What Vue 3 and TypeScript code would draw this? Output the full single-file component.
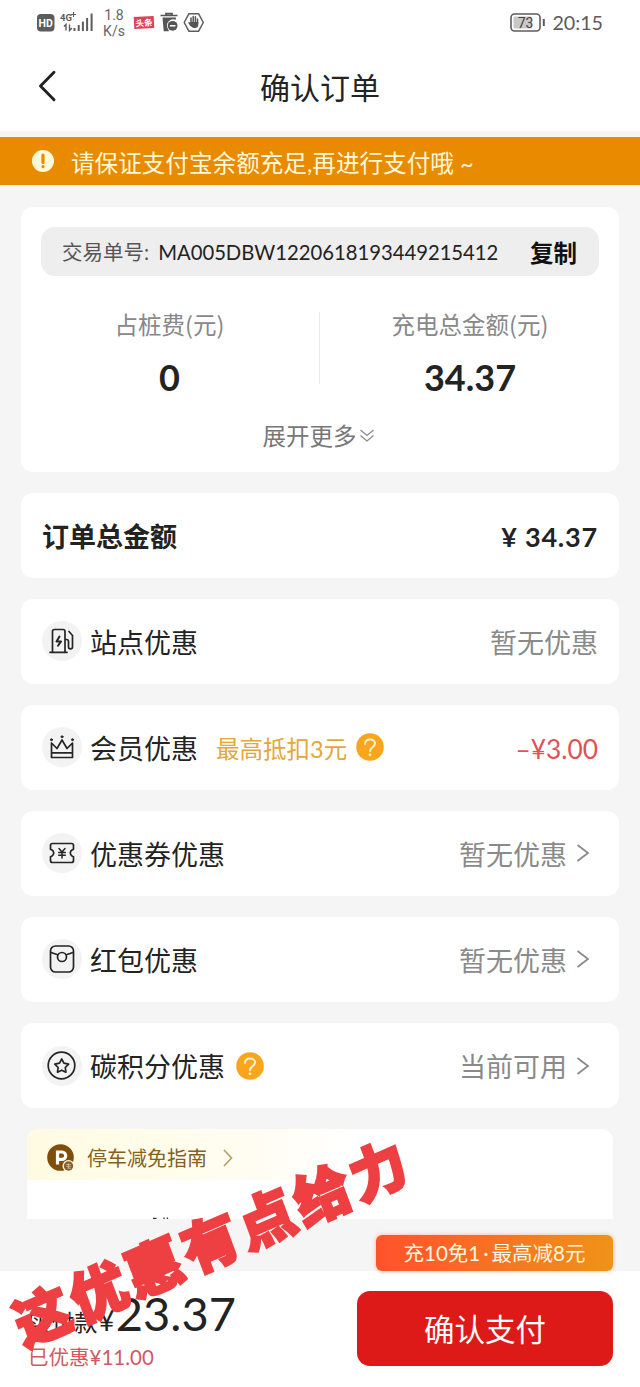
<script setup lang="ts">
type IconName = 'station' | 'crown' | 'coupon' | 'packet' | 'star'

interface DiscountRow {
  icon: IconName
  label: string
  hint?: string
  help?: boolean
  value: string
  negative?: boolean
  arrow?: boolean
}

const rows: DiscountRow[] = [
  { icon: 'station', label: '站点优惠', value: '暂无优惠' },
  { icon: 'crown', label: '会员优惠', hint: '最高抵扣3元', help: true, value: '–¥3.00', negative: true },
  { icon: 'coupon', label: '优惠券优惠', value: '暂无优惠', arrow: true },
  { icon: 'packet', label: '红包优惠', value: '暂无优惠', arrow: true },
  { icon: 'star', label: '碳积分优惠', help: true, value: '当前可用', arrow: true },
]
</script>

<template>
  <div class="screen">
    <div class="status">
      <svg class="status-icons" width="180" height="46" viewBox="0 0 180 46">
        <rect x="7" y="14" width="17.500" height="17.500" rx="4" fill="#5c5c5c" />
        <text x="15.700" y="27" text-anchor="middle" class="hd">HD</text>
        <text x="30" y="20.500" class="net">4G</text>
        <path d="M43.500 12v5M41 14.500h5" stroke="#5c5c5c" stroke-width="1.100" />
        <path d="M36 30.500v-6l-2 2M39.500 24.500v6l2.500-2.500" fill="none" stroke="#5c5c5c" stroke-width="1.400" />
        <path d="M44.500 31v-3M48.700 31v-6M52.900 31v-9.500M57.100 31v-13M61.600 31v-17.500" stroke="#5c5c5c" stroke-width="2" />
        <text x="84" y="20" text-anchor="middle" class="speed">1.8</text>
        <text x="84" y="36" text-anchor="middle" class="speed">K/s</text>
        <g transform="rotate(-3 114 22.500)">
          <rect x="104" y="16.500" width="20" height="12" fill="#dd4258" />
          <text x="114" y="26" text-anchor="middle" class="news">头条</text>
        </g>
        <path d="M130.500 15.500h17M136 15v-1.300h6V15" fill="none" stroke="#555" stroke-width="1.700" />
        <path d="M132.500 17.500h13.500l-.3 2.300a6.300 6.300 0 0 0-7.700 9.200l1 2.300h-5.300z" fill="#555" />
        <circle cx="142.600" cy="25.800" r="4.900" fill="#555" />
        <path d="M139.800 25.800h5.600" stroke="#fff" stroke-width="1.500" />
        <path d="M159 13.700h9.500l4.800 8.800-4.800 8.800H159l-4.800-8.800z" fill="none" stroke="#5c5c5c" stroke-width="1.500" stroke-linejoin="round" />
        <path d="M161 23v-5M163.200 23v-6.500M165.400 23v-6.300M167.500 23.500v-4.500M159 22.800l2 2.700" stroke="#555" stroke-width="1.500" stroke-linecap="round" />
        <path d="M160.300 22h8v3c0 1.800-1.500 3-3.800 3-2.200 0-3.200-1-4.200-3z" fill="#555" />
      </svg>
      <div class="status-right">
        <svg width="36" height="20" viewBox="0 0 36 20">
          <rect x="1" y="1" width="29" height="17" rx="3.500" fill="none" stroke="#5c5c5c" stroke-width="1.600" />
          <rect x="3.500" y="3.500" width="18" height="12" rx="1" fill="#c8c8c8" />
          <text x="15.500" y="14.800" text-anchor="middle" class="battery">73</text>
          <path d="M33.800 6v7" stroke="#5c5c5c" stroke-width="2" />
        </svg>
        <span class="clock">20:15</span>
      </div>
    </div>

    <header class="header">
      <svg class="back" width="20" height="32" viewBox="0 0 20 32">
        <path d="M17 2.200 3.500 16 17 29.800" fill="none" stroke="#222" stroke-width="2.900" stroke-linecap="round" stroke-linejoin="round" />
      </svg>
      <h1>确认订单</h1>
    </header>

    <div class="notice">
      <svg width="22" height="22" viewBox="0 0 22 22">
        <circle cx="11" cy="11" r="11" fill="#fff8d8" />
        <path d="M11 5v7.500" stroke="#e88b00" stroke-width="3.200" stroke-linecap="round" />
        <circle cx="11" cy="16.600" r="1.600" fill="#e88b00" />
      </svg>
      <span>请保证支付宝余额充足,再进行支付哦 ~</span>
    </div>

    <main class="content">
      <section class="card summary">
        <div class="order">
          <span class="order-label">交易单号:</span>
          <span class="order-no">MA005DBW1220618193449215412</span>
          <b>复制</b>
        </div>
        <div class="fees">
          <div class="fee">
            <span>占桩费(元)</span>
            <strong>0</strong>
          </div>
          <i class="divider"></i>
          <div class="fee">
            <span>充电总金额(元)</span>
            <strong>34.37</strong>
          </div>
        </div>
        <div class="more">
          <span>展开更多</span>
          <svg width="16" height="14" viewBox="0 0 16 14">
            <path d="M1.500 1 8 6.500 14.500 1M1.500 6.500 8 12l6.500-5.500" fill="none" stroke="#8a8a8a" stroke-width="1.200" />
          </svg>
        </div>
      </section>

      <section class="card row total">
        <b>订单总金额</b>
        <strong>¥ 34.37</strong>
      </section>

      <section v-for="row in rows" :key="row.icon" class="card row">
        <div class="badge">
          <svg width="30" height="30" viewBox="0 0 30 30" fill="none" stroke="#252525" stroke-width="1.700" stroke-linecap="round" stroke-linejoin="round">
            <template v-if="row.icon === 'station'">
              <path d="M5.500 26V5.500Q5.500 3.500 7.500 3.500H16Q18 3.500 18 5.500V26M3 26.300h17M18 13.500h1.500q2 0 2 2V21q0 1.900 2 1.900t2-1.900V9.500L22 5.500M25.500 12V9.500" />
              <path d="M12.500 10.500 9.500 15.500h4.500L11 19.800" stroke-width="2" />
            </template>
            <template v-else-if="row.icon === 'crown'">
              <path d="M4.500 11v14.500h21V11L20 16.500 15 8l-5 8.500zM4.500 20.800h21" />
              <circle cx="15" cy="4.800" r="1" fill="#252525" stroke-width="1" />
              <circle cx="4.500" cy="7.700" r="1" fill="#252525" stroke-width="1" />
              <circle cx="25.500" cy="7.700" r="1" fill="#252525" stroke-width="1" />
            </template>
            <template v-else-if="row.icon === 'coupon'">
              <path d="M5.500 5.500h19q2 0 2 2v3.700l-1.500.8a3.500 3.500 0 0 0 0 6l1.500.8v3.700q0 2-2 2h-19q-2 0-2-2v-3.700L5 18a3.500 3.500 0 0 0 0-6l-1.500-.8V7.500q0-2 2-2z" />
              <path d="m12 10.500 3 3.500 3-3.500M15 14v6M11.700 14.500h6.600M11.700 17.300h6.600" stroke-width="1.500" />
            </template>
            <template v-else-if="row.icon === 'packet'">
              <rect x="3.500" y="2" width="23" height="26" rx="5" />
              <path d="M4 8.500 10.700 10.700M26 8.500 19.300 10.700" />
              <circle cx="15" cy="13" r="4.500" />
            </template>
            <template v-else>
              <circle cx="14.500" cy="14.500" r="13.300" />
              <path d="m14.700 8 2.200 4.200 4.700.9-3.300 3.400.6 4.700-4.200-2-4.200 2 .6-4.700-3.300-3.400 4.700-.9z" />
            </template>
          </svg>
        </div>
        <span class="label">{{ row.label }}</span>
        <span v-if="row.hint" class="hint">{{ row.hint }}</span>
        <svg v-if="row.help" class="help" width="28" height="28" viewBox="0 0 28 28">
          <circle cx="14" cy="14" r="13.800" fill="#fba51c" />
          <path d="M9 11c.2-3 2.300-4.600 5-4.600 2.900 0 5 1.700 5 4.200 0 3.300-5 3.500-5 7.600" fill="none" stroke="#fff2cf" stroke-width="2" stroke-linecap="round" />
          <circle cx="14" cy="21.800" r="1.400" fill="#fff2cf" />
        </svg>
        <span class="value" :class="{ negative: row.negative }">{{ row.value }}</span>
        <svg v-if="row.arrow" class="arrow" width="14" height="20" viewBox="0 0 14 20">
          <path d="M1.500 2 12 10 1.500 18" fill="none" stroke="#8a8a8a" stroke-width="1.800" />
        </svg>
      </section>

      <section class="parking">
        <div class="parking-head">
          <svg width="28" height="28" viewBox="0 0 28 28">
            <circle cx="13.500" cy="13.500" r="13.300" fill="#7f4e08" />
            <path d="M10.500 20.500V8h4.500a3.700 3.700 0 0 1 0 7.400h-4" fill="none" stroke="#fff" stroke-width="3.200" />
            <circle cx="21.500" cy="22" r="6" fill="#fffbe4" />
            <circle cx="21.500" cy="22" r="4.700" fill="#85602f" />
            <path d="M19.200 20.500h4.600M19.200 22.300h4.600M20.500 24.200h3.300M21.500 19.500v5" stroke="#d7c3a3" stroke-width=".8" />
          </svg>
          <span>停车减免指南</span>
          <svg width="12" height="20" viewBox="0 0 12 20">
            <path d="m2 2 7.500 8L2 18" fill="none" stroke="#b79b60" stroke-width="1.600" />
          </svg>
        </div>
        <svg class="peek" width="18" height="3" viewBox="0 0 18 3">
          <path d="M1 2.300h3.500M12 1.500v1.500M15 1.500l.8 1.500" stroke="#333" stroke-width="1.300" />
        </svg>
      </section>
    </main>

    <footer class="pay">
      <div class="amount">
        <div class="due"><span>实付款</span><span class="yen">¥</span><span class="price">23.37</span></div>
        <div class="saved">已优惠¥11.00</div>
      </div>
      <button type="button">确认支付</button>
      <div class="promo">充10免1<i>·</i>最高减8元</div>
    </footer>

    <div class="caption">这优惠有点给力</div>
  </div>
</template>

<style>
body {
  margin: 0;
  background: #fff;
}
</style>

<style scoped>
.screen {
  position: relative;
  width: 640px;
  height: 1387px;
  overflow: hidden;
  display: flex;
  flex-direction: column;
  background: #f5f5f5;
  color: #232323;
  font-family: Lato, "Noto Sans CJK SC", sans-serif;
}
.screen * {
  box-sizing: border-box;
}
svg {
  flex: none;
  display: block;
}
.status {
  flex: none;
  display: flex;
  justify-content: space-between;
  height: 46px;
  padding: 0 37px 0 30px;
  background: #fff;
}
.hd {
  font: 700 10.500px Roboto, sans-serif;
  fill: #fff;
}
.net {
  font: 700 9.500px Roboto, sans-serif;
  fill: #5c5c5c;
}
.speed {
  font: 400 14px Roboto, sans-serif;
  fill: #666;
}
.news {
  font: 700 8.500px "Noto Sans CJK SC", sans-serif;
  fill: #fff;
}
.battery {
  font: 400 14px Roboto, sans-serif;
  fill: #444;
}
.status-right {
  display: flex;
  align-items: center;
  gap: 6px;
  height: 45px;
}
.clock {
  font-size: 19.700px;
  line-height: 24px;
  color: #5c5c5c;
}
.header {
  flex: none;
  position: relative;
  height: 91px;
  padding: 0 37px;
  display: flex;
  align-items: center;
  justify-content: center;
  background: #fff;
  border-bottom: 6px solid #f7f5ee;
}
.back {
  position: absolute;
  left: 37px;
  top: 24px;
}
.header h1 {
  margin: -3px 0 0;
  font-size: 30px;
  line-height: 40px;
  font-weight: 400;
}
.notice {
  flex: none;
  height: 48px;
  padding-left: 32px;
  display: flex;
  align-items: center;
  gap: 17px;
  background: #e88b00;
  color: #fff8d8;
  font-size: 23.600px;
  line-height: 30px;
  white-space: nowrap;
}
.notice span {
  padding-top: 3px;
}
.content {
  flex: none;
  height: 1086px;
  padding: 21.500px 21px 0;
  display: flex;
  flex-direction: column;
  gap: 21.100px;
}
.card {
  flex: none;
  height: 85px;
  border-radius: 12px;
  background: #fff;
}
.summary {
  height: 265px;
  padding: 20.500px 20px 0;
}
.order {
  height: 49px;
  padding: 0 22px 0 21px;
  border-radius: 14px;
  display: flex;
  align-items: center;
  background: #eee;
  font-size: 20.500px;
  line-height: 28px;
  white-space: nowrap;
}
.order-label {
  color: #555;
}
.order-no {
  margin-left: 9px;
  font-size: 20.250px;
}
.order b {
  margin-left: auto;
  padding-top: 2px;
  font-size: 23.500px;
  color: #111;
}
.fees {
  display: flex;
  align-items: flex-start;
  height: 112px;
  padding-top: 36px;
}
.fee {
  width: 257px;
  display: flex;
  flex-direction: column;
  align-items: center;
}
.fee:last-child {
  flex: 1;
  padding-left: 21px;
}
.fee span {
  height: 24px;
  line-height: 24px;
  font-size: 23.500px;
  font-family: "Noto Sans CJK SC", sans-serif;
  color: #888;
}
.fee strong {
  margin-top: 23px;
  height: 36px;
  line-height: 36px;
  font-size: 36px;
}
.divider {
  width: 1px;
  height: 72px;
  margin-left: 21px;
  background: #e8e8e8;
}
.more {
  display: flex;
  align-items: center;
  justify-content: center;
  height: 40px;
  margin-top: 28px;
  gap: 2px;
  padding-right: 3px;
  font-size: 23.500px;
  line-height: 30px;
  color: #777;
}
.row {
  display: flex;
  align-items: center;
  padding: 3px 21px 0;
  font-size: 27px;
  line-height: 36px;
}
.total b {
  font-size: 27px;
}
.total strong {
  margin-left: auto;
  font-size: 27px;
  letter-spacing: .8px;
}
.badge {
  width: 40px;
  height: 40px;
  margin-top: -3px;
  border-radius: 50%;
  display: flex;
  align-items: center;
  justify-content: center;
  background: #f3f3f3;
}
.label {
  margin-left: 8px;
}
.hint {
  margin-left: 18px;
  font-size: 23.500px;
  color: #e5a63a;
}
.help {
  margin: -3px 0 0 11px;
}
.hint + .help {
  margin-left: 9px;
}
.value {
  margin-left: auto;
  color: #8a8a8a;
}
.negative {
  font-size: 26.300px;
  color: #dd5358;
}
.arrow {
  margin: -3px 8px 0 9px;
}
.parking {
  flex: none;
  height: 90px;
  margin: 0 6px;
  border-radius: 12px 12px 0 0;
  background: #fff;
}
.parking-head {
  height: 51px;
  padding: 7px 0 0 20px;
  border-radius: 12px 12px 0 0;
  display: flex;
  align-items: center;
  background: linear-gradient(90deg, #fffbe2 0, #fffdf0 36%, #fff 56%);
  color: #84611f;
  font-size: 20px;
  line-height: 28px;
}
.parking-head span {
  margin: 0 15px 0 12px;
}
.peek {
  margin: 36px 0 0 125px;
}
.pay {
  flex: 1;
  position: relative;
  display: flex;
  justify-content: space-between;
  padding: 20px 27px 0 28px;
  background: #fff;
}
.amount {
  white-space: nowrap;
}
.due {
  display: flex;
  align-items: baseline;
  height: 53px;
  margin-top: -1px;
  line-height: 46px;
  font-size: 23.200px;
}
.yen {
  margin-left: 1px;
  font-size: 28px;
}
.price {
  margin-left: 1px;
  font-size: 47px;
}
.saved {
  font-size: 20.500px;
  line-height: 28px;
  color: #cf5a62;
}
button {
  width: 256px;
  height: 75px;
  border: 0;
  border-radius: 13px;
  padding: 0;
  background: #de1a19;
  color: #fff;
  font: 400 30.500px/40px Lato, "Noto Sans CJK SC", sans-serif;
}
.promo {
  position: absolute;
  left: 376px;
  top: -36px;
  width: 237px;
  height: 36px;
  border-radius: 6px;
  display: flex;
  align-items: center;
  justify-content: center;
  background: linear-gradient(90deg, #ff522c, #ef9318);
  box-shadow: 0 0 4px #f6b78c;
  color: #fff6df;
  font-size: 20.500px;
  line-height: 28px;
  white-space: nowrap;
}
.promo i {
  font-style: normal;
  margin: 0 3px;
}
.caption {
  position: absolute;
  left: -19px;
  top: 1204px;
  width: 460px;
  height: 70px;
  text-align: center;
  white-space: nowrap;
  font: 900 57px/70px "Noto Sans CJK SC", sans-serif;
  letter-spacing: 4px;
  color: #ee3f43;
  -webkit-text-stroke: 2.500px #ee3f43;
  transform: rotate(-23.500deg) skewX(-3deg);
}
</style>
